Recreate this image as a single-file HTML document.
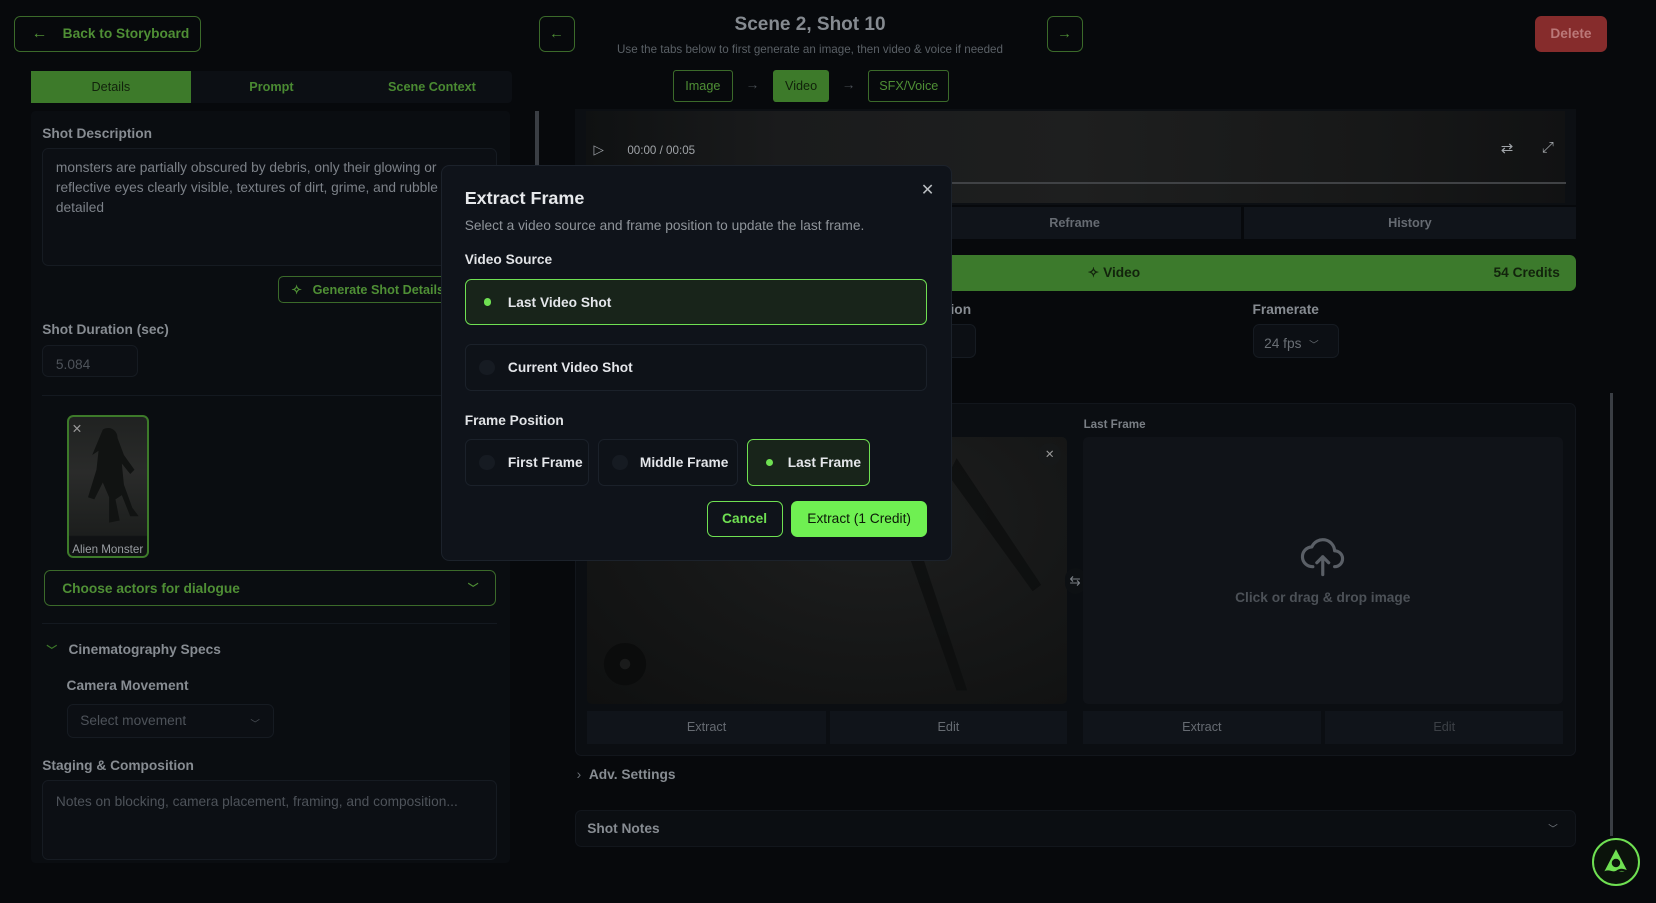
<!DOCTYPE html>
<html><head><meta charset="utf-8"><style>
html{zoom:1.05612}
*{box-sizing:border-box;margin:0;padding:0}
body{width:1568px;height:855px;background:#07090c;font-family:"Liberation Sans",sans-serif;position:relative;overflow:hidden;color:#8b9098}
.a{position:absolute}
.gb{border:1px solid #3b6a2a;border-radius:6px;color:#4f8f35}
.lbl{font-size:13px;font-weight:bold;color:#878c92}
.box{background:#0c0f14;border:1px solid #161b22;border-radius:6px}
.ph{color:#4e535a;font-size:13px}
.btn{background:#10141a;color:#666b72;font-size:12px;display:flex;align-items:center;justify-content:center}
.m{background:#0f131a;border:1px solid #1c222b;border-radius:8px}
.opt{border:1px solid #1b212a;border-radius:6px;background:#0e1218;color:#e4e6ea;font-weight:bold;font-size:13px;display:flex;align-items:center}
.sel{border:1px solid #6fe052;background:#18241a}
.rd{width:15px;height:15px;border-radius:50%;background:#161b22;display:inline-block;margin:0 12px 0 13px}
.dot{width:7px;height:7px;border-radius:50%;background:#6fe052;display:inline-block;margin:0 16px 0 17px}
</style></head><body>
<div class="a gb" style="left:13px;top:15px;width:177px;height:34px;font-size:13px;font-weight:bold;display:flex;align-items:center;padding-left:16px"><span style="font-size:15px">←</span>&nbsp;&nbsp;&nbsp;&nbsp;Back to Storyboard</div>
<div class="a gb" style="left:510px;top:15px;width:34px;height:34px;display:flex;align-items:center;justify-content:center;font-size:14px">←</div>
<div class="a gb" style="left:991px;top:15px;width:34px;height:34px;display:flex;align-items:center;justify-content:center;font-size:14px">→</div>
<div class="a" style="left:567px;top:13px;width:400px;text-align:center;font-size:18px;font-weight:bold;color:#858a90">Scene 2, Shot 10</div>
<div class="a" style="left:517px;top:41px;width:500px;text-align:center;font-size:11px;color:#5a6066">Use the tabs below to first generate an image, then video &amp; voice if needed</div>
<div class="a" style="left:1453px;top:15px;width:69px;height:34px;background:#862c2c;border-radius:6px;color:#bb7878;font-size:13px;font-weight:bold;display:flex;align-items:center;justify-content:center">Delete</div>
<div class="a gb" style="left:637px;top:66px;width:57px;height:31px;font-size:12px;display:flex;align-items:center;justify-content:center;border-radius:3px">Image</div>
<div class="a" style="left:706px;top:73px;color:#4a4f55;font-size:13px">→</div>
<div class="a" style="left:732px;top:66px;width:53px;height:31px;background:#3d7a2a;color:#10200a;font-size:12px;display:flex;align-items:center;justify-content:center;border-radius:3px">Video</div>
<div class="a" style="left:797px;top:73px;color:#4a4f55;font-size:13px">→</div>
<div class="a gb" style="left:822px;top:66px;width:77px;height:31px;font-size:12px;display:flex;align-items:center;justify-content:center;border-radius:3px">SFX/Voice</div>
<div class="a" style="left:29px;top:67px;width:456px;height:31px;background:#0c0f14;border-radius:4px"></div>
<div class="a" style="left:29px;top:67px;width:152px;height:31px;background:#3d7a2a;color:#12230c;font-size:12px;display:flex;align-items:center;justify-content:center">Details</div>
<div class="a" style="left:181px;top:67px;width:152px;height:31px;color:#4a8a32;font-size:12px;display:flex;align-items:center;justify-content:center;font-weight:bold">Prompt</div>
<div class="a" style="left:333px;top:67px;width:152px;height:31px;color:#4a8a32;font-size:12px;display:flex;align-items:center;justify-content:center;font-weight:bold">Scene Context</div>
<div class="a" style="left:29px;top:105px;width:454px;height:712px;background:#0a0d11;border-radius:4px"></div>
<div class="a" style="left:507px;top:105px;width:3px;height:52px;background:#3a3e44"></div>
<div class="a lbl" style="left:40px;top:119px">Shot Description</div>
<div class="a box" style="left:40px;top:140px;width:431px;height:112px;padding:9px 12px;font-size:13px;line-height:19px;color:#7c8188">monsters are partially obscured by debris, only their glowing or reflective eyes clearly visible, textures of dirt, grime, and rubble detailed</div>
<div class="a gb" style="left:263px;top:261px;width:180px;height:26px;font-size:12px;font-weight:bold;display:flex;align-items:center;padding-left:12px;border-radius:5px">✧&nbsp;&nbsp;&nbsp;Generate Shot Details</div>
<div class="a lbl" style="left:40px;top:305px">Shot Duration (sec)</div>
<div class="a box" style="left:40px;top:327px;width:91px;height:30px;padding:7px 12px" ><span class="ph">5.084</span></div>
<div class="a" style="left:40px;top:374px;width:431px;height:1px;background:#141920"></div>
<div class="a" style="left:63px;top:393px;width:78px;height:135px;border:2px solid #3d7a2a;border-radius:6px;background:linear-gradient(#202221,#2a2b2a 40%,#1c1e1d 85%,#101214 86%);overflow:hidden">
<svg width="74" height="112" viewBox="0 0 74 112"><path d="M32 12c6-4 14 0 14 8l6 16 10 14-4 4-8-10 2 20 8 22 6 8-8 0-8-20-6 4 4 20-10 2 0-24-6-14-8 16-6-2 8-26 2-18-6 4z" fill="#111312"/></svg>
<div style="position:absolute;left:3px;top:4px;color:#999;font-size:12px">✕</div>
<div style="position:absolute;bottom:0;left:0;right:0;font-size:11px;color:#9a9ea3;text-align:center">Alien Monster</div></div>
<div class="a gb" style="left:42px;top:540px;width:428px;height:34px;font-size:13px;font-weight:bold;display:flex;align-items:center;justify-content:space-between;padding:0 16px">Choose actors for dialogue<span style="font-size:10px">﹀</span></div>
<div class="a" style="left:40px;top:590px;width:431px;height:1px;background:#141920"></div>
<div class="a lbl" style="left:44px;top:608px"><span style="color:#3d7a2a;font-size:10px">﹀</span>&nbsp;&nbsp;&nbsp;Cinematography Specs</div>
<div class="a lbl" style="left:63px;top:642px">Camera Movement</div>
<div class="a box" style="left:63px;top:667px;width:196px;height:32px;padding:7px 12px;display:flex;justify-content:space-between"><span class="ph">Select movement</span><span class="ph" style="font-size:9px;margin-top:3px">﹀</span></div>
<div class="a lbl" style="left:40px;top:718px">Staging &amp; Composition</div>
<div class="a box" style="left:40px;top:739px;width:431px;height:75px;padding:9px 12px"><span class="ph">Notes on blocking, camera placement, framing, and composition...</span></div>
<div class="a" style="left:544px;top:103px;width:948px;height:91px;background:#0c0f13"></div>
<div class="a" style="left:555px;top:105px;width:927px;height:87px;background:linear-gradient(90deg,#0f1112,#1a1b1c 20%,#1e1f1f 50%,#171818 80%,#111213)"></div>
<div class="a" style="left:562px;top:134px;color:#9a9ea3;font-size:13px">▷</div>
<div class="a" style="left:594px;top:136px;color:#a0a4a8;font-size:11px">00:00 / 00:05</div>
<div class="a" style="left:1421px;top:133px;color:#a0a4a8;font-size:14px">⇄</div>
<div class="a" style="left:1460px;top:133px;color:#a0a4a8;font-size:14px">⤢</div>
<div class="a" style="left:900px;top:172px;width:583px;height:2px;background:#404245"></div>
<div class="a btn" style="left:544px;top:196px;width:631px;height:30px;font-weight:bold"><span style="margin-left:316px">Reframe</span></div>
<div class="a btn" style="left:1178px;top:196px;width:314px;height:30px;font-weight:bold">History</div>
<div class="a" style="left:544px;top:241px;width:948px;height:35px;background:#3c7a2c;border-radius:6px;color:#12230c;font-size:13px;font-weight:bold"><span style="position:absolute;left:486px;top:10px">✧ Video</span><span style="position:absolute;right:15px;top:10px">54 Credits</span></div>
<div class="a lbl" style="left:900px;top:286px">ion</div>
<div class="a box" style="left:880px;top:307px;width:44px;height:32px"></div>
<div class="a lbl" style="left:1186px;top:286px">Framerate</div>
<div class="a box" style="left:1186px;top:307px;width:82px;height:32px;padding:7px 10px"><span class="ph" style="color:#6a6f75">24 fps&nbsp;&nbsp;<span style="font-size:9px">﹀</span></span></div>
<div class="a" style="left:544px;top:382px;width:948px;height:334px;background:#0b0e12;border:1px solid #12161c;border-radius:6px"></div>
<div class="a" style="left:1026px;top:396px;font-size:11px;color:#7a7f85;font-weight:bold">Last Frame</div>
<div class="a" style="left:556px;top:414px;width:454px;height:253px;border-radius:5px;background:radial-gradient(ellipse at 60% 30%,#1e1f1f,#161717 50%,#0f1010);overflow:hidden">
<svg width="454" height="253"><path d="M350 20l80 120-8 6-80-110zM300 60l60 180-10 0-60-170z" fill="#0c0d0d" opacity=".7"/><circle cx="36" cy="215" r="20" fill="#0b0c0c"/><circle cx="36" cy="215" r="5" fill="#1a1b1b"/></svg></div>
<div class="a" style="left:983px;top:419px;width:22px;height:22px;border-radius:50%;background:#161819;color:#999;font-size:11px;text-align:center;line-height:22px">✕</div>
<div class="a" style="left:1008px;top:538px;width:20px;height:24px;border-radius:10px;background:#0d1013;color:#7a7f85;font-size:13px;text-align:center;line-height:24px">⇆</div>
<div class="a" style="left:1025px;top:414px;width:455px;height:253px;background:#101318;border-radius:5px"></div>
<svg class="a" style="left:1230px;top:505px" width="45" height="45" viewBox="0 0 24 24" fill="none" stroke="#5a5f66" stroke-width="1.6" stroke-linecap="round" stroke-linejoin="round"><path d="M7 17a5 5 0 0 1-.5-10A6 6 0 0 1 18 9a4 4 0 0 1 0 8"/><path d="M12 21v-9M9 15l3-3 3 3"/></svg>
<div class="a" style="left:1025px;top:559px;width:455px;text-align:center;font-size:13px;color:#4c5157;font-weight:bold">Click or drag &amp; drop image</div>
<div class="a btn" style="left:556px;top:673px;width:226px;height:31px">Extract</div>
<div class="a btn" style="left:786px;top:673px;width:224px;height:31px">Edit</div>
<div class="a btn" style="left:1025px;top:673px;width:226px;height:31px">Extract</div>
<div class="a btn" style="left:1255px;top:673px;width:225px;height:31px;color:#3c4046">Edit</div>
<div class="a lbl" style="left:546px;top:726px"><span style="font-weight:normal;color:#6a6f75">›</span>&nbsp;&nbsp;Adv. Settings</div>
<div class="a" style="left:544px;top:767px;width:948px;height:35px;background:#0b0e12;border:1px solid #12161c;border-radius:6px"></div>
<div class="a lbl" style="left:556px;top:777px">Shot Notes</div>
<div class="a" style="left:1466px;top:777px;color:#7a7f85;font-size:9px">﹀</div>
<div class="a" style="left:1524px;top:372px;width:3px;height:420px;background:#3a3e44"></div>
<div class="a" style="left:1507px;top:793px;width:46px;height:46px;border-radius:50%;border:2px solid #6fe052;background:#0b130b"></div>
<svg class="a" style="left:1513px;top:799px" width="34" height="34" viewBox="0 0 34 34"><path d="M17 5L28 26H6z" fill="#6fe052"/><circle cx="17" cy="18" r="4" fill="#0b130b"/><path d="M6 27c5-3 8 2 12-1s7-1 10 0" stroke="#0b130b" stroke-width="2" fill="none"/></svg>
<div class="a m" style="left:418px;top:156px;width:483px;height:375px"></div>
<div class="a" style="left:872px;top:170px;color:#b8bcc0;font-size:15px">✕</div>
<div class="a" style="left:440px;top:178px;font-size:17px;font-weight:bold;color:#e6e8eb">Extract Frame</div>
<div class="a" style="left:440px;top:206px;font-size:13px;color:#8f949a">Select a video source and frame position to update the last frame.</div>
<div class="a" style="left:440px;top:239px;font-size:13px;font-weight:bold;color:#e1e3e6">Video Source</div>
<div class="a opt sel" style="left:440px;top:264px;width:438px;height:44px"><span class="dot"></span>Last Video Shot</div>
<div class="a opt" style="left:440px;top:326px;width:438px;height:44px"><span class="rd"></span>Current Video Shot</div>
<div class="a" style="left:440px;top:391px;font-size:13px;font-weight:bold;color:#e1e3e6">Frame Position</div>
<div class="a opt" style="left:440px;top:416px;width:118px;height:44px"><span class="rd"></span>First Frame</div>
<div class="a opt" style="left:566px;top:416px;width:133px;height:44px"><span class="rd" style="margin-right:11px"></span>Middle Frame</div>
<div class="a opt sel" style="left:707px;top:416px;width:117px;height:44px"><span class="dot" style="margin-right:14px"></span>Last Frame</div>
<div class="a" style="left:669px;top:474px;width:72px;height:34px;border:1px solid #6fe052;border-radius:6px;color:#6fe052;font-size:13px;font-weight:bold;display:flex;align-items:center;justify-content:center">Cancel</div>
<div class="a" style="left:749px;top:474px;width:129px;height:34px;background:#6ff052;border-radius:6px;color:#0c1a08;font-size:13px;display:flex;align-items:center;justify-content:center">Extract (1 Credit)</div>
</body></html>
